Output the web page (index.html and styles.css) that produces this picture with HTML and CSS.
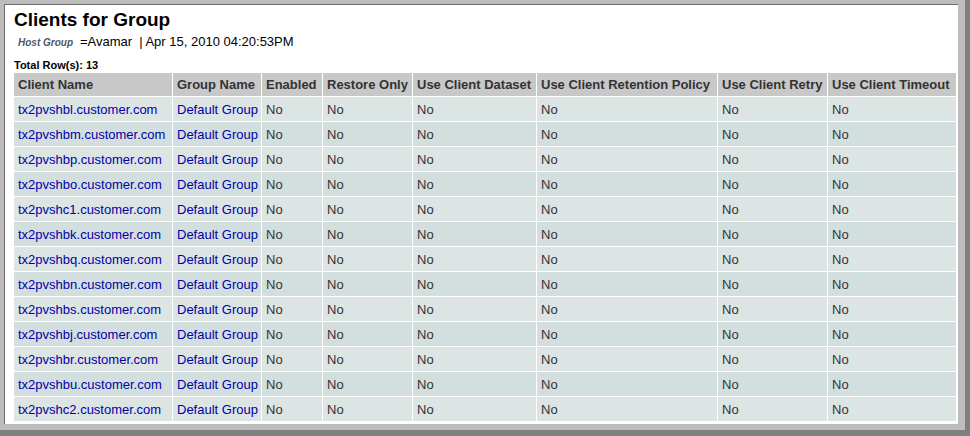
FILE: index.html
```html
<!DOCTYPE html>
<html>
<head>
<meta charset="utf-8">
<link rel="stylesheet" href="styles.css">
</head>
<body>
<div class="frame">
  <div class="panel">
    <h1 class="title">Clients for Group</h1>
    <div class="sub"><span class="sub-label">Host Group</span><span class="sub-val">=Avamar</span><span class="sub-date">| Apr 15, 2010 04:20:53PM</span></div>
    <div class="total">Total Row(s): 13</div>
    <table class="grid">
      <colgroup>
        <col class="c1"><col class="c2"><col class="c3"><col class="c4"><col class="c5"><col class="c6"><col class="c7"><col class="c8">
      </colgroup>
      <thead>
        <tr><th>Client Name</th><th>Group Name</th><th>Enabled</th><th>Restore Only</th><th>Use Client Dataset</th><th>Use Client Retention Policy</th><th>Use Client Retry</th><th>Use Client Timeout</th></tr>
      </thead>
      <tbody>
        <tr><td><a>tx2pvshbl.customer.com</a></td><td><a>Default Group</a></td><td>No</td><td>No</td><td>No</td><td>No</td><td>No</td><td>No</td></tr>
        <tr><td><a>tx2pvshbm.customer.com</a></td><td><a>Default Group</a></td><td>No</td><td>No</td><td>No</td><td>No</td><td>No</td><td>No</td></tr>
        <tr><td><a>tx2pvshbp.customer.com</a></td><td><a>Default Group</a></td><td>No</td><td>No</td><td>No</td><td>No</td><td>No</td><td>No</td></tr>
        <tr><td><a>tx2pvshbo.customer.com</a></td><td><a>Default Group</a></td><td>No</td><td>No</td><td>No</td><td>No</td><td>No</td><td>No</td></tr>
        <tr><td><a>tx2pvshc1.customer.com</a></td><td><a>Default Group</a></td><td>No</td><td>No</td><td>No</td><td>No</td><td>No</td><td>No</td></tr>
        <tr><td><a>tx2pvshbk.customer.com</a></td><td><a>Default Group</a></td><td>No</td><td>No</td><td>No</td><td>No</td><td>No</td><td>No</td></tr>
        <tr><td><a>tx2pvshbq.customer.com</a></td><td><a>Default Group</a></td><td>No</td><td>No</td><td>No</td><td>No</td><td>No</td><td>No</td></tr>
        <tr><td><a>tx2pvshbn.customer.com</a></td><td><a>Default Group</a></td><td>No</td><td>No</td><td>No</td><td>No</td><td>No</td><td>No</td></tr>
        <tr><td><a>tx2pvshbs.customer.com</a></td><td><a>Default Group</a></td><td>No</td><td>No</td><td>No</td><td>No</td><td>No</td><td>No</td></tr>
        <tr><td><a>tx2pvshbj.customer.com</a></td><td><a>Default Group</a></td><td>No</td><td>No</td><td>No</td><td>No</td><td>No</td><td>No</td></tr>
        <tr><td><a>tx2pvshbr.customer.com</a></td><td><a>Default Group</a></td><td>No</td><td>No</td><td>No</td><td>No</td><td>No</td><td>No</td></tr>
        <tr><td><a>tx2pvshbu.customer.com</a></td><td><a>Default Group</a></td><td>No</td><td>No</td><td>No</td><td>No</td><td>No</td><td>No</td></tr>
        <tr><td><a>tx2pvshc2.customer.com</a></td><td><a>Default Group</a></td><td>No</td><td>No</td><td>No</td><td>No</td><td>No</td><td>No</td></tr>
      </tbody>
    </table>
  </div>
</div>
</body>
</html>
```

FILE: styles.css
```css
html, body {
  margin: 0;
  padding: 0;
  background: #b8b8b8;
}
body {
  width: 970px;
  height: 436px;
  overflow: hidden;
  font-family: "Liberation Sans", Arial, sans-serif;
}
.frame {
  box-sizing: border-box;
  width: 970px;
  height: 436px;
  background: #bdbdbd;
  padding: 4px 7px 6px 4px;
  border-right: 5px solid #7f7f7f;
  border-bottom: 6px solid #7f7f7f;
}
.panel {
  box-sizing: border-box;
  height: 100%;
  background: #ffffff;
  border-left: 1px solid #6e6e6e;
  border-top: 1px solid #6e6e6e;
  padding: 0 0 0 9px;
}
.title {
  margin: 0;
  padding-top: 3px;
  font-size: 19px;
  line-height: 24px;
  font-weight: bold;
  color: #000;
}
.sub {
  display: flex;
  align-items: baseline;
  margin-top: 2px;
  padding-left: 4px;
  height: 16px;
  line-height: 16px;
  font-size: 13px;
  color: #000;
}
.sub-label {
  font-size: 10px;
  font-weight: bold;
  font-style: italic;
  color: #4f5a66;
  margin-right: 7px;
}
.sub-val {
  margin-right: 7px;
}
.total {
  margin-top: 9px;
  font-size: 11px;
  line-height: 12px;
  font-weight: bold;
  color: #000;
}
.grid {
  border-collapse: collapse;
  table-layout: fixed;
  width: 943px;
  margin-left: -1px;
  margin-top: 1px;
  font-size: 13px;
}
.c1 { width: 159px; }
.c2 { width: 89px; }
.c3 { width: 61px; }
.c4 { width: 90px; }
.c5 { width: 124px; }
.c6 { width: 181px; }
.c7 { width: 110px; }
.c8 { width: 129px; }
.grid th, .grid td {
  border: 1px solid #ffffff;
  padding: 0 0 0 4px;
  text-align: left;
  white-space: nowrap;
  overflow: hidden;
}
.grid th {
  height: 23px;
  background: #c8c8c8;
  color: #333333;
  font-weight: bold;
}
.grid td {
  height: 24px;
  color: #333333;
}
.grid tbody tr:nth-child(odd) td { background: #dce4e4; }
.grid tbody tr:nth-child(even) td { background: #d3dfdf; }
.grid a {
  color: #0000a8;
  text-decoration: none;
}
```
